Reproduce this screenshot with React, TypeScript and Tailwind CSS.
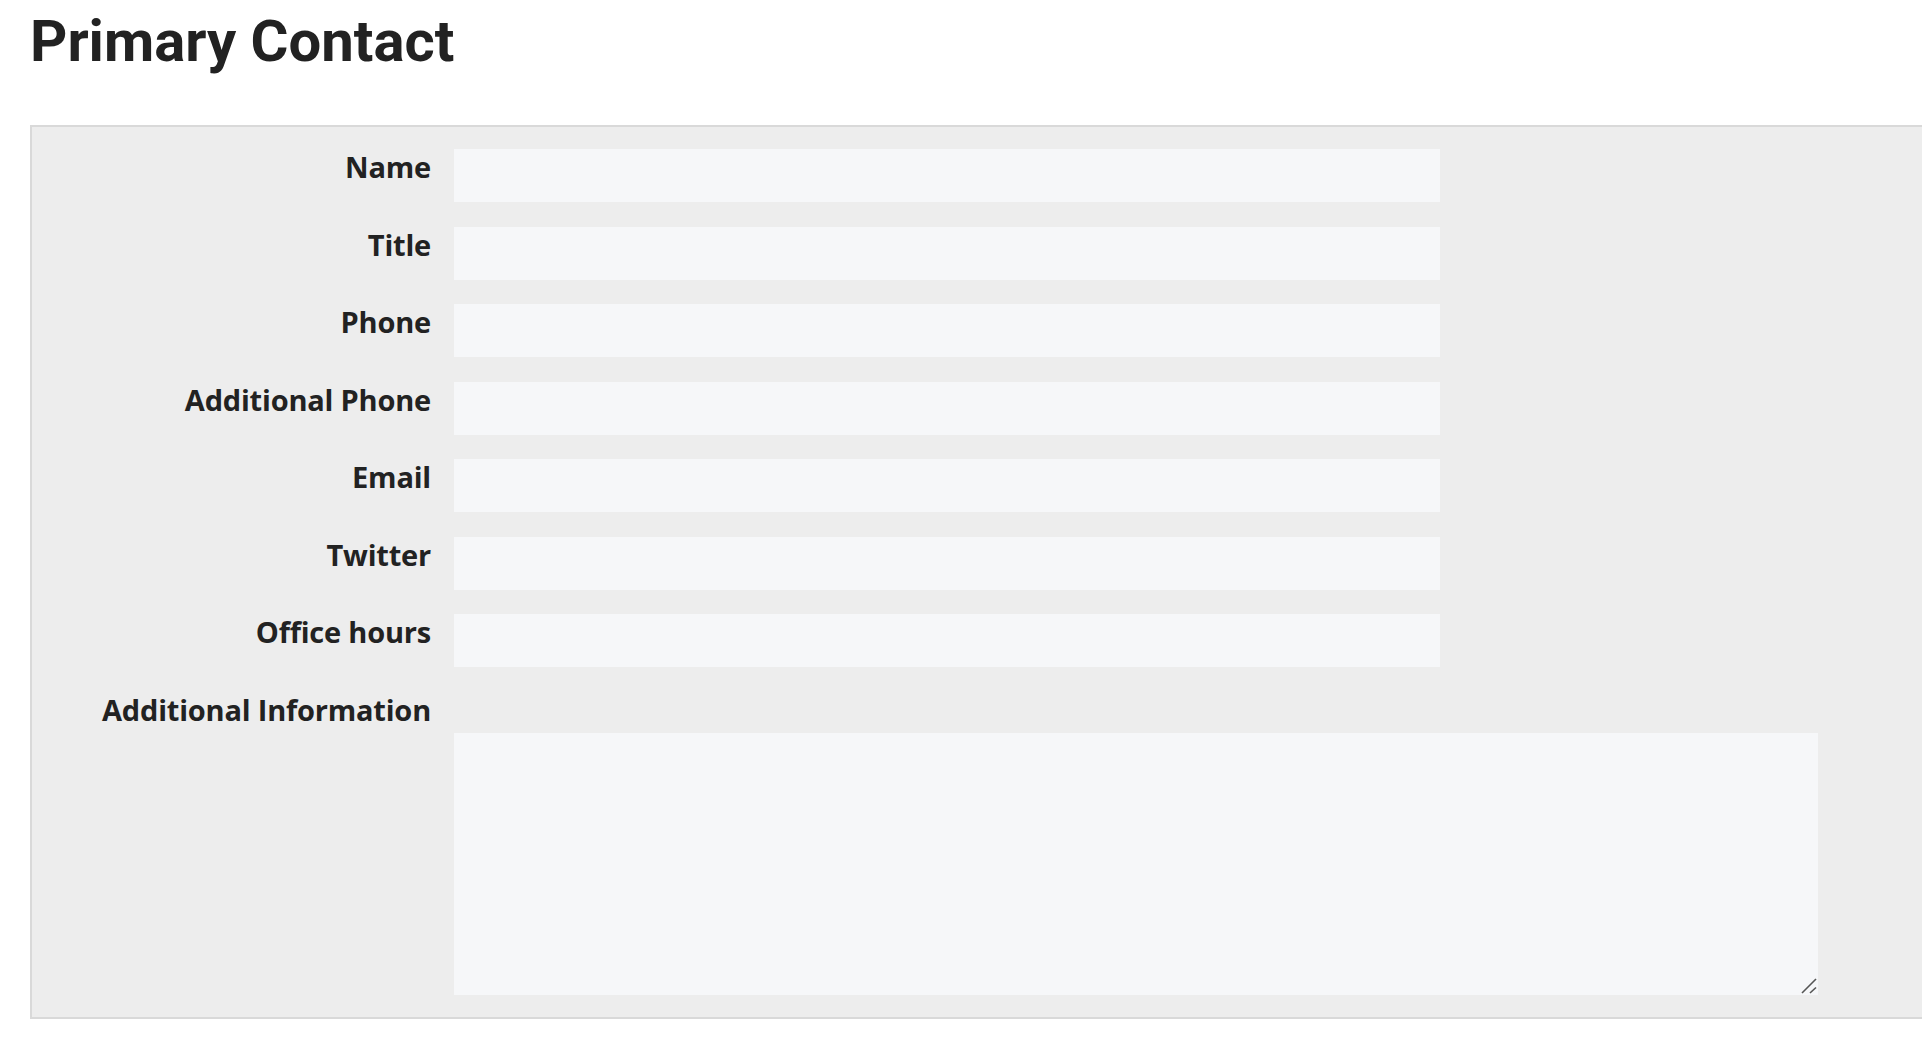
import React from "react";

const fields = ["Name", "Title", "Phone", "Additional Phone", "Email", "Twitter", "Office hours"];

export default function App() {
  return (
    <div className="min-h-screen w-full overflow-hidden bg-white text-[#222]">
      <h1
        className="pl-[30px] pt-[12px] text-[58px] font-bold leading-[58px] text-[#222]"
        style={{ fontFamily: "Roboto, 'Liberation Sans', sans-serif" }}
      >
        Primary Contact
      </h1>
      <div
        className="ml-[30px] mt-[55px] border-t-2 border-b-2 border-l-2 border-[#d9d9d9] bg-[#ededed] pt-[22px] pb-[22px]"
        style={{ fontFamily: "'Open Sans', 'Noto Sans', sans-serif" }}
      >
        <div className="flex flex-col gap-[24.5px]">
          {fields.map((f) => (
            <div key={f} className="flex items-start">
              <label className="w-[399px] shrink-0 text-right text-[29px] font-bold leading-[36px] tracking-[-0.2px] text-[#222]">
                {f}
              </label>
              <input
                type="text"
                className="ml-[23px] h-[53px] w-[986px] bg-[#f6f7f9] px-3 outline-none"
              />
            </div>
          ))}
          <div className="flex flex-col">
            <div className="flex pb-[5px]">
              <label className="w-[399px] shrink-0 text-right text-[29px] font-bold leading-[36px] tracking-[-0.2px] text-[#222]">
                Additional Information
              </label>
            </div>
            <div className="relative ml-[422px] h-[262px] w-[1364px]">
              <textarea className="block h-full w-full resize-none bg-[#f6f7f9] p-3 outline-none" />
              <svg
                className="pointer-events-none absolute bottom-0 right-0"
                width="18"
                height="18"
                viewBox="0 0 18 18"
              >
                <line x1="2" y1="16" x2="16" y2="2" stroke="#555" strokeWidth="1.6" />
                <line x1="10" y1="16" x2="16" y2="10.5" stroke="#555" strokeWidth="1.6" />
              </svg>
            </div>
          </div>
        </div>
      </div>
    </div>
  );
}
